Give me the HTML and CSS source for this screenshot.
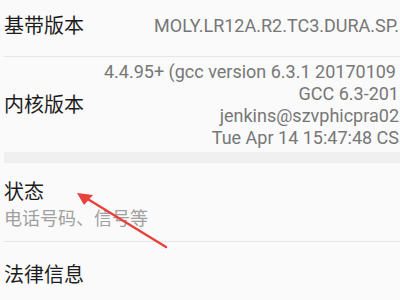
FILE: index.html
```html
<!DOCTYPE html>
<html lang="zh-CN">
<head>
  <meta charset="UTF-8">
  <title>关于手机</title>
  <link rel="stylesheet" href="styles.css">
</head>
<body>
  <div class="screen">
    <div class="item item-first">
      <span class="title">基带版本</span>
      <span class="value">MOLY.LR12A.R2.TC3.DURA.SP.</span>
    </div>

    <div class="item item-kernel">
      <span class="title">内核版本</span>
      <div class="value value-multi">
        <div class="line-short">4.4.95+ (gcc version 6.3.1 20170109</div>
        <div>GCC 6.3-201</div>
        <div>jenkins@szvphicpra02</div>
        <div>Tue Apr 14 15:47:48 CS</div>
      </div>
    </div>

    <div class="group-gap"></div>

    <div class="item item-stack">
      <span class="title">状态</span>
      <span class="summary">电话号码、信号等</span>
    </div>

    <div class="item item-last">
      <span class="title">法律信息</span>
    </div>
  </div>

  <!-- annotation arrow -->
  <svg class="arrow" width="400" height="300" viewBox="0 0 400 300">
    <line x1="166" y1="247" x2="86" y2="198" stroke="#e8413c" stroke-width="2.4" stroke-linecap="round"/>
    <polygon points="77,193 93,195 84,205" fill="#e8413c"/>
  </svg>
</body>
</html>
```

FILE: styles.css
```css
html, body {
  margin: 0;
  padding: 0;
  height: 100%;
  overflow: hidden;
  background-color: #fafafa;
}

body {
  position: relative;
  font-family: Roboto, "Noto Sans CJK SC", sans-serif;
}

.screen {
  width: 400px;
  margin-top: -5px;
}

.item {
  display: flex;
  align-items: center;
  justify-content: space-between;
  margin-left: 4px;
  border-bottom: 1px solid #e6e6e6;
}

.item-first {
  height: 61px;
}

.item-kernel {
  height: 95px;
  border-bottom: none;
}

.item-stack {
  flex-direction: column;
  align-items: flex-start;
  justify-content: flex-start;
  height: 79px;
  padding-top: 16px;
  box-sizing: border-box;
}

.item-last {
  height: 60px;
  padding-top: 5px;
  box-sizing: border-box;
  border-bottom: none;
}

.title {
  font-size: 20px;
  line-height: 26px;
  color: #1c1c1c;
  white-space: nowrap;
}

.value {
  font-size: 18px;
  line-height: 22px;
  color: #777;
  white-space: nowrap;
  text-align: right;
  padding-right: 1px;
}

.line-short {
  padding-right: 3px;
}

.summary {
  margin-top: 3px;
  font-size: 18px;
  line-height: 22px;
  color: #a0a0a0;
}

.group-gap {
  height: 11px;
  margin-left: 4px;
  background-color: #f0f0f0;
}

.arrow {
  position: absolute;
  left: 0;
  top: 0;
  pointer-events: none;
}
```
